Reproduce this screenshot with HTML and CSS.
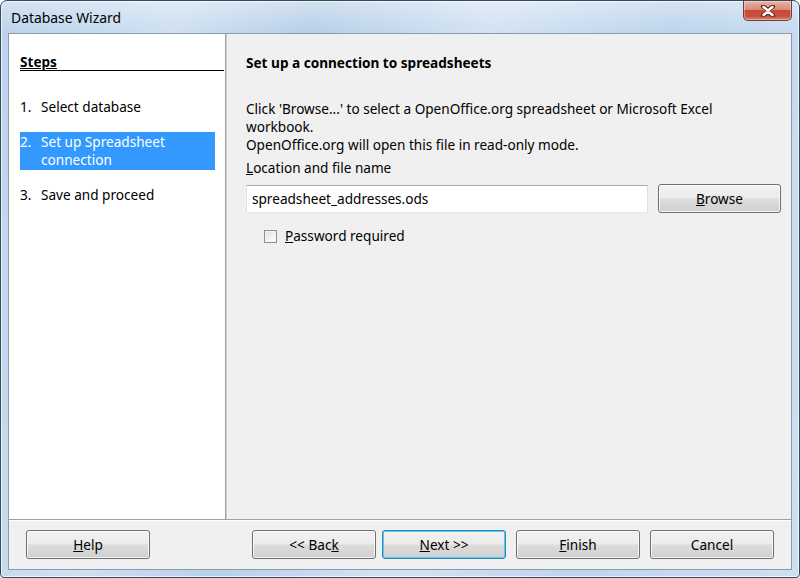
FILE: index.html
```html
<!DOCTYPE html>
<html>
<head>
<meta charset="utf-8">
<link rel="stylesheet" href="styles.css">
</head>
<body>
<div class="window">
  <div class="titlebar">
    <span class="title">Database Wizard</span>
    <div class="close" aria-label="Close">
      <svg width="18" height="12" viewBox="0 0 18 12">
        <path d="M4 1.5 L9 5 L14 1.5 M4 10.5 L9 7 L14 10.5" fill="none" stroke="#5a2a22" stroke-width="4.2" stroke-linecap="round"/>
        <path d="M4.5 2 L9 5.5 L13.5 2 M9 5.5 L9 6.5 M4.5 10 L9 6.5 L13.5 10" fill="none" stroke="#ffffff" stroke-width="2.4" stroke-linecap="round"/>
      </svg>
    </div>
  </div>
  <div class="client">
    <div class="main">
      <div class="steps">
        <div class="steps-head">Steps</div>
        <ul class="step-list">
          <li class="step"><span class="num">1.</span><span>Select database</span></li>
          <li class="step active"><span class="num">2.</span><span>Set up Spreadsheet connection</span></li>
          <li class="step"><span class="num">3.</span><span>Save and proceed</span></li>
        </ul>
      </div>
      <div class="page">
        <div class="page-title">Set up a connection to spreadsheets</div>
        <p class="desc">Click 'Browse...' to select a OpenOffice.org spreadsheet or Microsoft Excel workbook.<br>OpenOffice.org will open this file in read-only mode.</p>
        <div class="label"><u>L</u>ocation and file name</div>
        <div class="file-row">
          <div class="input">spreadsheet_addresses.ods</div>
          <button class="btn browse"><u>B</u>rowse</button>
        </div>
        <label class="check-row"><span class="checkbox"></span><span><u>P</u>assword required</span></label>
      </div>
    </div>
    <div class="footer">
      <button class="btn help"><u>H</u>elp</button>
      <button class="btn back">&lt;&lt; Bac<u>k</u></button>
      <button class="btn focused next"><u>N</u>ext &gt;&gt;</button>
      <button class="btn finish"><u>F</u>inish</button>
      <button class="btn cancel">Cancel</button>
    </div>
  </div>
</div>
</body>
</html>
```
FILE: styles.css
```css
html, body {
  margin: 0;
  padding: 0;
  background: #ffffff;
}
body {
  font-family: "Noto Sans", "Open Sans", "DejaVu Sans", sans-serif;
  font-size: 13.6px;
  color: #000;
}
.window {
  width: 800px;
  height: 578px;
  box-sizing: border-box;
  border: 1px solid #34495e;
  border-radius: 7px 7px 4px 4px;
  padding: 0 7px 7px 7px;
  display: flex;
  flex-direction: column;
  background:
    linear-gradient(180deg, rgba(255,255,255,0.35) 0px, rgba(255,255,255,0) 30px),
    linear-gradient(100deg, #bcd4ec 0%, #cfe0f2 20%, #b8d0e8 35%, #d3e3f4 55%, #bed5ec 75%, #cde0f2 100%);
  box-shadow: inset 0 0 0 1px rgba(255,255,255,0.7);
}
.titlebar {
  height: 32px;
  display: flex;
  align-items: flex-start;
  justify-content: space-between;
  flex: none;
}
.title {
  margin-top: 7px;
  margin-left: 3px;
  font-size: 13.9px;
  color: #000;
}
.close {
  width: 49px;
  height: 20px;
  box-sizing: border-box;
  border: 1px solid #7a3a30;
  border-top: none;
  border-radius: 0 0 5px 5px;
  background: linear-gradient(180deg, #e9b3a6 0%, #d98a78 45%, #c4493a 50%, #c7503d 80%, #dc8a6e 100%);
  display: flex;
  align-items: center;
  justify-content: center;
  box-shadow: inset 0 0 0 1px rgba(255,255,255,0.35);
}
.client {
  flex: 1;
  border: 1px solid #8d9aa8;
  background: #f0f0f0;
  display: flex;
  flex-direction: column;
  min-height: 0;
}
.main {
  height: 485px;
  display: flex;
  border-bottom: 1px solid #a0a0a0;
  box-shadow: 0 1px 0 #ffffff;
  flex: none;
}
.steps {
  width: 217px;
  background: #ffffff;
  border-right: 1px solid #a0a0a0;
  box-shadow: 1px 0 0 #d0d0d0;
  padding: 20px 0 0 11px;
  box-sizing: border-box;
  flex: none;
}
.steps-head {
  font-weight: bold;
  text-decoration: underline;
  line-height: 16px;
  border-bottom: 1px solid #000;
  padding-bottom: 0px;
  margin-right: 1px;
}
.step-list {
  list-style: none;
  margin: 26px 10px 0 0;
  padding: 0;
  display: flex;
  flex-direction: column;
  gap: 15px;
}
.step {
  display: grid;
  grid-template-columns: 21px 1fr;
  line-height: 18px;
  padding: 1px 0;
}
.step.active {
  background: #3399ff;
  color: #ffffff;
}
.page {
  flex: 1;
  padding: 21px 0 0 20px;
}
.page-title {
  font-weight: bold;
  line-height: 16px;
}
.desc {
  margin: 29px 0 0 0;
  line-height: 18px;
  width: 500px;
}
.label {
  line-height: 18px;
  margin-top: 5px;
}
.file-row {
  display: flex;
  align-items: center;
  gap: 10px;
  margin-top: 8px;
}
.input {
  width: 402px;
  height: 28px;
  box-sizing: border-box;
  border: 1px solid #abadb3;
  border-left-color: #e2e3ea;
  border-right-color: #dbdfe6;
  border-bottom-color: #e3e9ef;
  background: #ffffff;
  padding: 0 5px;
  line-height: 26px;
}
.btn {
  font: inherit;
  color: #000;
  width: 124px;
  height: 29px;
  box-sizing: border-box;
  border: 1px solid #707070;
  border-radius: 3px;
  background: linear-gradient(180deg, #f2f2f2 0%, #ebebeb 48%, #dddddd 52%, #cfcfcf 100%);
  box-shadow: inset 0 0 0 1px rgba(255,255,255,0.75);
  padding: 0;
  cursor: default;
}
.btn.browse {
  width: 123px;
  margin-top: -1px;
}
.btn.focused {
  border-color: #3c7fb1;
  box-shadow: inset 0 0 0 1px #48d0f8;
}
.check-row {
  display: flex;
  align-items: center;
  gap: 8px;
  margin: 14px 0 0 18px;
  line-height: 18px;
}
.checkbox {
  width: 13px;
  height: 13px;
  box-sizing: border-box;
  border: 1px solid #8f8f8f;
  background: linear-gradient(135deg, #e0e0e0 0%, #f4f4f4 60%, #ffffff 100%);
  box-shadow: inset 0 0 0 1px #f4f4f4;
}
.footer {
  flex: 1;
  display: flex;
  align-items: flex-start;
  padding: 10px 0 0 17px;
}
.footer .back {
  margin-left: 102px;
}
.footer .next {
  margin-left: 6px;
}
.footer .finish,
.footer .cancel {
  margin-left: 10px;
}
```
